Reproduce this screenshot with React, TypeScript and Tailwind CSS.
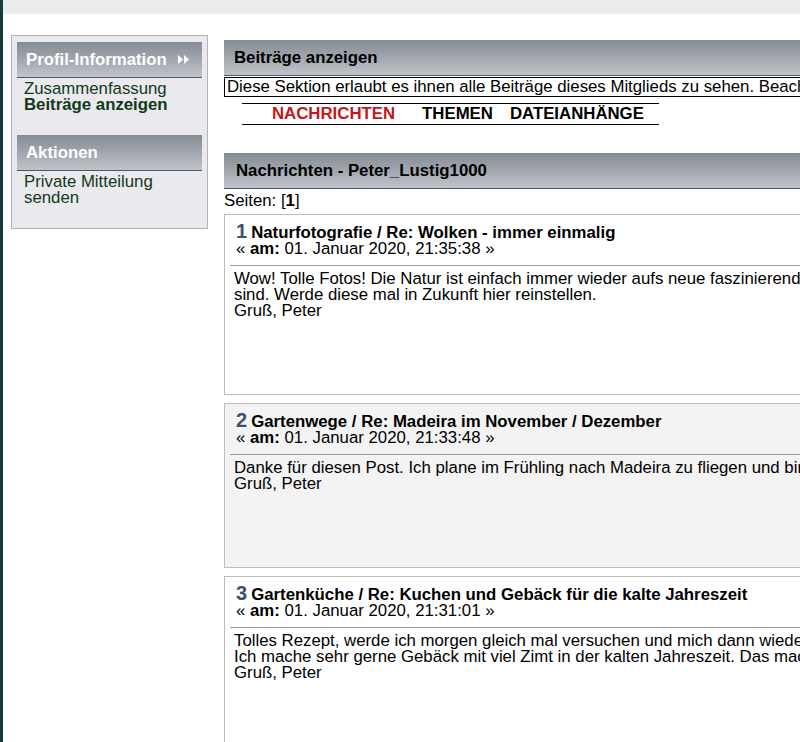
import React from 'react';

interface Post {
  id: number;
  board: string;
  title: string;
  date: string;
  lines: string[];
  shaded?: boolean;
}

const posts: Post[] = [
  {
    id: 1,
    board: 'Naturfotografie',
    title: 'Re: Wolken - immer einmalig',
    date: '01. Januar 2020, 21:35:38',
    lines: [
      'Wow! Tolle Fotos! Die Natur ist einfach immer wieder aufs neue faszinierend. Ich habe auch ein paar Bilder, die ähnlich schön',
      'sind. Werde diese mal in Zukunft hier reinstellen.',
      'Gruß, Peter',
    ],
  },
  {
    id: 2,
    board: 'Gartenwege',
    title: 'Re: Madeira im November / Dezember',
    date: '01. Januar 2020, 21:33:48',
    lines: [
      'Danke für diesen Post. Ich plane im Frühling nach Madeira zu fliegen und bin schon sehr gespannt auf die Gärten dort.',
      'Gruß, Peter',
    ],
    shaded: true,
  },
  {
    id: 3,
    board: 'Gartenküche',
    title: 'Re: Kuchen und Gebäck für die kalte Jahreszeit',
    date: '01. Januar 2020, 21:31:01',
    lines: [
      'Tolles Rezept, werde ich morgen gleich mal versuchen und mich dann wieder hier melden, wie es geworden ist.',
      'Ich mache sehr gerne Gebäck mit viel Zimt in der kalten Jahreszeit. Das macht das ganze Haus gemütlich.',
      'Gruß, Peter',
    ],
  },
];

function BarHeader({ children, className = '' }: { children: React.ReactNode; className?: string }) {
  return (
    <div
      className={`h-[36px] flex items-center bg-linear-to-b from-[#858b94] to-[#c0c4ca] border-b border-[#4f5a68] font-bold ${className}`}
    >
      {children}
    </div>
  );
}

function PostBox({ post }: { post: Post }) {
  return (
    <div
      className={`border border-[#bdbdbd] px-[5px] pt-[8px] ${post.shaded ? 'bg-[#f3f3f3]' : 'bg-white'}`}
    >
      <div className="pl-[6px]">
        <div className="flex items-baseline leading-[16px]">
          <span className="text-[20px] font-bold text-[#3e5070] mr-[4px]">{post.id}</span>
          <span className="font-bold whitespace-nowrap">
            {post.board} / {post.title}
          </span>
        </div>
        <div className="leading-[15px] whitespace-nowrap">
          « <span className="font-bold">am:</span> {post.date} »
        </div>
      </div>
      <div className="mt-[9px] border-t border-[#9a9a9a]" />
      <div className="pl-[4px] pt-[5px] pb-[75px] leading-[16px]">
        {post.lines.map((line, i) => (
          <div key={i} className="whitespace-nowrap">
            {line}
          </div>
        ))}
      </div>
    </div>
  );
}

export default function App() {
  return (
    <div className="w-[800px] min-h-[742px] overflow-hidden flex bg-white text-black text-[16.8px] leading-[16px] font-['Liberation_Sans',Arial,sans-serif]">
      <div className="w-[3px] shrink-0 bg-[#173a3b]" />
      <div className="flex-1 min-w-0">
        <div className="h-[14px] bg-[#ececec]" />
        <div className="flex items-start pl-[8px] pt-[21px]">
          {/* Seitenleiste */}
          <div className="w-[197px] shrink-0 border border-[#b4b4b4] bg-[#e9e9ee] px-[5px] pt-[6px] pb-[22px]">
            <BarHeader className="pl-[9px] pr-[13px] justify-between text-white">
              <span>Profil-Information</span>
              <svg width="11" height="9" viewBox="0 0 11 9" fill="white">
                <path d="M0 0 L5 4.5 L0 9 Z" />
                <path d="M6 0 L11 4.5 L6 9 Z" />
              </svg>
            </BarHeader>
            <div className="pl-[7px] pt-[3px] text-[#12391a]">
              <div>Zusammenfassung</div>
              <div className="font-bold">Beiträge anzeigen</div>
            </div>
            <BarHeader className="mt-[22px] pl-[9px] text-white">Aktionen</BarHeader>
            <div className="pl-[7px] pt-[3px] text-[#12391a]">
              <div>Private Mitteilung</div>
              <div>senden</div>
            </div>
          </div>

          {/* Hauptbereich */}
          <div className="w-[760px] shrink-0 ml-[16px] pt-[5px]">
            <BarHeader className="pl-[10px]">Beiträge anzeigen</BarHeader>
            <div className="mt-[1px] border border-black bg-white pl-[2px] h-[20px] flex items-center whitespace-nowrap overflow-hidden">
              Diese Sektion erlaubt es ihnen alle Beiträge dieses Mitglieds zu sehen. Beachten Sie, dass Sie nur Beiträge sehen können, die in Bereichen geschrieben wurden, auf die Sie Zugriff haben.
            </div>
            <div className="ml-[18px] mt-[6px] w-[417px] border-t border-b border-black h-[22px] flex items-center font-bold">
              <span className="ml-[30px] text-[#c4161c]">NACHRICHTEN</span>
              <span className="ml-[27px]">THEMEN</span>
              <span className="ml-[17px]">DATEIANHÄNGE</span>
            </div>

            <BarHeader className="mt-[28px] pl-[12px]">Nachrichten - Peter_Lustig1000</BarHeader>
            <div className="pt-[4px] pb-[5px]">
              Seiten: [<span className="font-bold">1</span>]
            </div>

            <div className="flex flex-col gap-[8px]">
              {posts.map(post => (
                <PostBox key={post.id} post={post} />
              ))}
            </div>
          </div>
        </div>
      </div>
    </div>
  );
}
